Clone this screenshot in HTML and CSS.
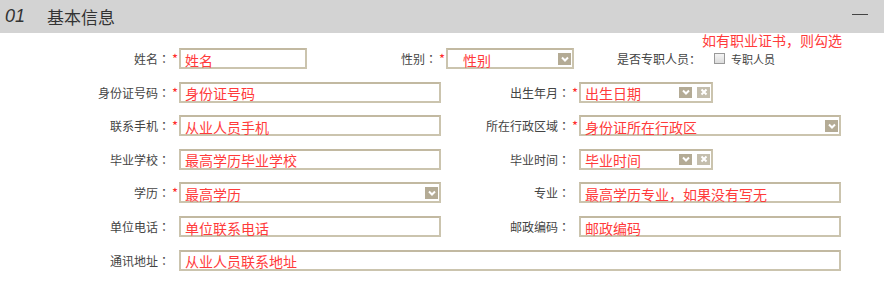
FILE: index.html
```html
<!DOCTYPE html>
<html lang="zh-CN">

<head>
    <meta charset="UTF-8" />
    <title>基本信息</title>
    <link rel="stylesheet" href="styles.css">
</head>

<body>
    <div class="panel-head">
        <span class="num">01</span>
        <span class="title">基本信息</span>
        <span class="fold"></span>
    </div>

    <div class="form">
        <div class="row-first">
            <label class="lbl">姓名<span class="colon">：</span><i class="star">*</i></label>
            <div class="field short"><span class="ph">姓名</span></div>

            <label class="lbl lbl-sex">性别<span class="colon">：</span><i class="star">*</i></label>
            <div class="field short select"><span class="ph ph-sex">性别</span>
                <span class="btn arrow"><svg viewBox="0 0 10 10"><polyline points="2,3.5 5,6.5 8,3.5" /></svg></span>
            </div>

            <div class="fulltime">
                <span class="hint">如有职业证书，则勾选</span>
                <label class="lbl-plain">是否专职人员<span class="colon">：</span></label>
                <span class="check"></span>
                <span class="check-text">专职人员</span>
            </div>
        </div>

        <div class="grid">
            <label class="lbl">身份证号码<span class="colon">：</span><i class="star">*</i></label>
            <div class="field"><span class="ph">身份证号码</span></div>
            <label class="lbl">出生年月<span class="colon">：</span><i class="star">*</i></label>
            <div class="field date"><span class="ph">出生日期</span>
                <span class="btn arrow"><svg viewBox="0 0 10 10"><polyline points="2,3.5 5,6.5 8,3.5" /></svg></span>
                <span class="btn clear"><svg viewBox="0 0 10 10"><path d="M2.5 2.5 L7.5 7.5 M7.5 2.5 L2.5 7.5" /></svg></span>
            </div>

            <label class="lbl">联系手机<span class="colon">：</span><i class="star">*</i></label>
            <div class="field"><span class="ph">从业人员手机</span></div>
            <label class="lbl">所在行政区域<span class="colon">：</span><i class="star">*</i></label>
            <div class="field select"><span class="ph">身份证所在行政区</span>
                <span class="btn arrow"><svg viewBox="0 0 10 10"><polyline points="2,3.5 5,6.5 8,3.5" /></svg></span>
            </div>

            <label class="lbl">毕业学校<span class="colon">：</span><i class="star"></i></label>
            <div class="field"><span class="ph">最高学历毕业学校</span></div>
            <label class="lbl">毕业时间<span class="colon">：</span><i class="star"></i></label>
            <div class="field date"><span class="ph">毕业时间</span>
                <span class="btn arrow"><svg viewBox="0 0 10 10"><polyline points="2,3.5 5,6.5 8,3.5" /></svg></span>
                <span class="btn clear"><svg viewBox="0 0 10 10"><path d="M2.5 2.5 L7.5 7.5 M7.5 2.5 L2.5 7.5" /></svg></span>
            </div>

            <label class="lbl">学历<span class="colon">：</span><i class="star">*</i></label>
            <div class="field select"><span class="ph">最高学历</span>
                <span class="btn arrow"><svg viewBox="0 0 10 10"><polyline points="2,3.5 5,6.5 8,3.5" /></svg></span>
            </div>
            <label class="lbl">专业<span class="colon">：</span><i class="star"></i></label>
            <div class="field"><span class="ph">最高学历专业，如果没有写无</span></div>

            <label class="lbl">单位电话<span class="colon">：</span><i class="star"></i></label>
            <div class="field"><span class="ph">单位联系电话</span></div>
            <label class="lbl">邮政编码<span class="colon">：</span><i class="star"></i></label>
            <div class="field"><span class="ph">邮政编码</span></div>

            <label class="lbl">通讯地址<span class="colon">：</span><i class="star"></i></label>
            <div class="field wide"><span class="ph">从业人员联系地址</span></div>
        </div>
    </div>
</body>

</html>
```

FILE: styles.css
```css
html,
body {
    margin: 0;
    padding: 0;
    background: white;
    font-family: "Noto Sans CJK SC", "Liberation Sans", sans-serif;
    overflow: hidden;
}

.panel-head {
    height: 33px;
    background: #d3d3d3;
    display: flex;
    align-items: center;
    position: relative;
    color: #333;
}

.panel-head .num {
    font-family: "Liberation Sans", sans-serif;
    font-style: italic;
    font-size: 18px;
    margin-left: 5px;
    width: 42px;
}

.panel-head .title {
    font-size: 17px;
}

.panel-head .fold {
    margin-left: auto;
    margin-right: 16px;
    width: 16px;
    height: 1px;
    background: #444;
    margin-top: -5px;
}

.form {
    padding-top: 15px;
}

.row-first {
    display: flex;
    align-items: center;
    height: 21px;
    margin-bottom: 12.5px;
}

.grid {
    display: grid;
    grid-template-columns: 179px 262px 138px 262px;
    grid-auto-rows: 21px;
    row-gap: 12.67px;
    align-items: center;
}

.lbl {
    display: flex;
    justify-content: flex-end;
    align-items: center;
    font-size: 12px;
    color: #444;
    height: 21px;
}

/* centred full-width colon, like the original Windows font */
.colon {
    font-family: "Noto Sans CJK TC", sans-serif;
}

.row-first .lbl {
    width: 179px;
}

.row-first .lbl-sex {
    width: 139px;
}

.star {
    font-style: normal;
    color: #ff2b2b;
    width: 9px;
    padding-left: 2px;
    box-sizing: border-box;
    font-size: 13px;
}

.field {
    position: relative;
    height: 21px;
    box-sizing: border-box;
    border: 2px solid #cbc4ae;
    border-top-color: #c2b9a1;
    background: white;
    display: flex;
    align-items: center;
    padding-left: 4px;
}

.field.short {
    width: 128px;
}

.field.date {
    width: 134px;
}

.field.wide {
    grid-column: 2 / 5;
}

.ph {
    color: #ff3b3b;
    font-size: 14px;
    line-height: 1;
    margin-top: 2px;
}

.ph-sex {
    margin-left: 11px;
}

.btn {
    position: absolute;
    top: 2px;
    width: 13px;
    height: 12px;
    display: flex;
    align-items: center;
    justify-content: center;
}

.btn svg {
    width: 10px;
    height: 10px;
    fill: none;
    stroke: white;
    stroke-width: 2;
}

.arrow {
    background: #b4ab95;
}

.select .arrow {
    right: 1px;
    top: 3px;
}

.date .arrow {
    right: 19px;
    top: 3px;
    height: 11px;
}

.date .clear {
    right: 1px;
    top: 3px;
    height: 11px;
    background: #c4bead;
}

.fulltime {
    position: relative;
    display: flex;
    align-items: center;
    margin-left: 43px;
    height: 21px;
}

.lbl-plain {
    font-size: 12px;
    color: #444;
}

.hint {
    position: absolute;
    left: 85px;
    top: -18px;
    white-space: nowrap;
    color: #ff3b3b;
    font-size: 14px;
}

.check {
    width: 9px;
    height: 9px;
    border: 1px solid #999;
    background: linear-gradient(#f4f4f4, #dcdcdc);
    margin-left: 13px;
}

.check-text {
    font-size: 11px;
    color: #444;
    margin-left: 6px;
}
```
